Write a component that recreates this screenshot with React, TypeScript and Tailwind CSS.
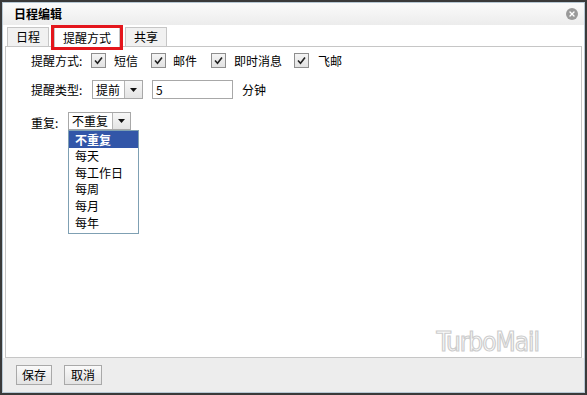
import { X } from "lucide-react";

const font = { fontFamily: '"Noto Sans CJK SC", "Liberation Sans", sans-serif' };

function Check() {
  return (
    <span className="flex h-[15px] w-[15px] items-center justify-center border border-[#8e8e8e] bg-gradient-to-b from-[#f4f4f4] to-[#e2e2e2]">
      <svg width="9" height="9" viewBox="0 0 9 9">
        <path d="M1 4.5 L3.5 7.2 L8 1.5" fill="none" stroke="#222" strokeWidth="1.6" />
      </svg>
    </span>
  );
}

function Arrow() {
  return (
    <span className="flex w-[18px] items-center justify-center self-stretch border-l border-[#b5b5b5] bg-gradient-to-b from-[#f7f7f7] to-[#e4e4e4]">
      <svg width="7" height="4" viewBox="0 0 7 4">
        <path d="M0 0 H7 L3.5 4 Z" fill="#111" />
      </svg>
    </span>
  );
}

export default function App() {
  const items = ["不重复", "每天", "每工作日", "每周", "每月", "每年"];
  return (
    <div className="h-[395px] w-[587px] bg-white text-[12px] text-black" style={font}>
      <div className="flex h-full flex-col border-2 border-[#3a3a3a]">
        <div className="flex h-full flex-col border border-[#b7c8d4]">
          {/* title */}
          <div className="flex h-[22px] items-center justify-between bg-gradient-to-b from-[#fbfbfb] to-[#ececec] pl-[11px] pr-[6px]">
            <span className="text-[12px] font-bold">日程编辑</span>
            <span className="flex h-[12px] w-[12px] items-center justify-center rounded-full bg-[#9a9a9a]">
              <X className="h-[8px] w-[8px] text-white" strokeWidth={4} />
            </span>
          </div>
          {/* tabs */}
          <div className="relative flex h-[21px] items-end gap-[5px] pl-[4px] pt-[1px]">
            <div className="flex h-[19px] w-[42px] items-center justify-center border border-b-0 border-[#c6c6c6] bg-[#f1f1f1]">日程</div>
            <div className="relative z-10 -mb-px flex h-[20px] w-[66px] items-center justify-center border border-b-0 border-[#c6c6c6] bg-white">
              提醒方式
              <span className="absolute -left-[4px] -right-[4px] -top-[3px] -bottom-[3px] border-[3px] border-[#e4161c]" />
            </div>
            <div className="flex h-[19px] w-[42px] items-center justify-center border border-b-0 border-[#c6c6c6] bg-[#f1f1f1]">共享</div>
          </div>
          {/* content */}
          <div className="mx-[2px] flex flex-1 flex-col border border-[#c6c6c6] bg-white pl-[25px] pt-[4px]">
            <div className="flex h-[19px] items-center">
              <span className="w-[60px]">提醒方式:</span>
              <Check />
              <span className="ml-[8px] w-[37px]">短信</span>
              <Check />
              <span className="ml-[7px] w-[38px]">邮件</span>
              <Check />
              <span className="ml-[8px] w-[60px]">即时消息</span>
              <Check />
              <span className="ml-[9px]">飞邮</span>
            </div>
            <div className="mt-[10px] flex h-[19px] items-center">
              <span className="w-[61px]">提醒类型:</span>
              <span className="flex h-[19px] w-[51px] items-center border border-[#a8a8a8] bg-white">
                <span className="flex-1 pl-[3px]">提前</span>
                <Arrow />
              </span>
              <span className="ml-[9px] flex h-[19px] w-[81px] items-center border border-[#a8a8a8] pl-[3px]">5</span>
              <span className="ml-[9px]">分钟</span>
            </div>
            <div className="mt-[13px] flex items-start">
              <span className="mt-[2px] w-[37px]">重复:</span>
              <div className="flex flex-col">
                <span className="flex h-[18px] w-[63px] items-center border border-[#a8a8a8] bg-white">
                  <span className="flex-1 pl-[3px]">不重复</span>
                  <Arrow />
                </span>
                <div className="w-[71px] border border-[#7fa0b3] bg-white pb-[2px]">
                  {items.map((it, i) => (
                    <div
                      key={it}
                      className={
                        i === 0
                          ? "flex h-[17px] items-center bg-[#3256a8] pl-[6px] font-bold text-white"
                          : "flex h-[16.6px] items-center pl-[6px]"
                      }
                    >
                      {it}
                    </div>
                  ))}
                </div>
              </div>
            </div>
            <div className="flex flex-1 items-end justify-end pb-[2px] pr-[42px]">
              <span
                className="text-[26px] leading-none tracking-[-1px] text-transparent"
                style={{ fontFamily: '"DejaVu Sans Condensed", "DejaVu Sans", sans-serif', fontStretch: "condensed", WebkitTextStroke: "1.2px #cdcdcd" }}
              >
                TurboMail
              </span>
            </div>
          </div>
          {/* footer */}
          <div className="flex h-[34px] items-center gap-[12px] bg-[#ededed] pl-[13px]">
            <button className="flex h-[20px] w-[36px] items-center justify-center border border-[#a9a9a9] bg-gradient-to-b from-[#fafafa] to-[#e3e3e3]">保存</button>
            <button className="flex h-[20px] w-[38px] items-center justify-center border border-[#a9a9a9] bg-gradient-to-b from-[#fafafa] to-[#e3e3e3]">取消</button>
          </div>
        </div>
      </div>
    </div>
  );
}
